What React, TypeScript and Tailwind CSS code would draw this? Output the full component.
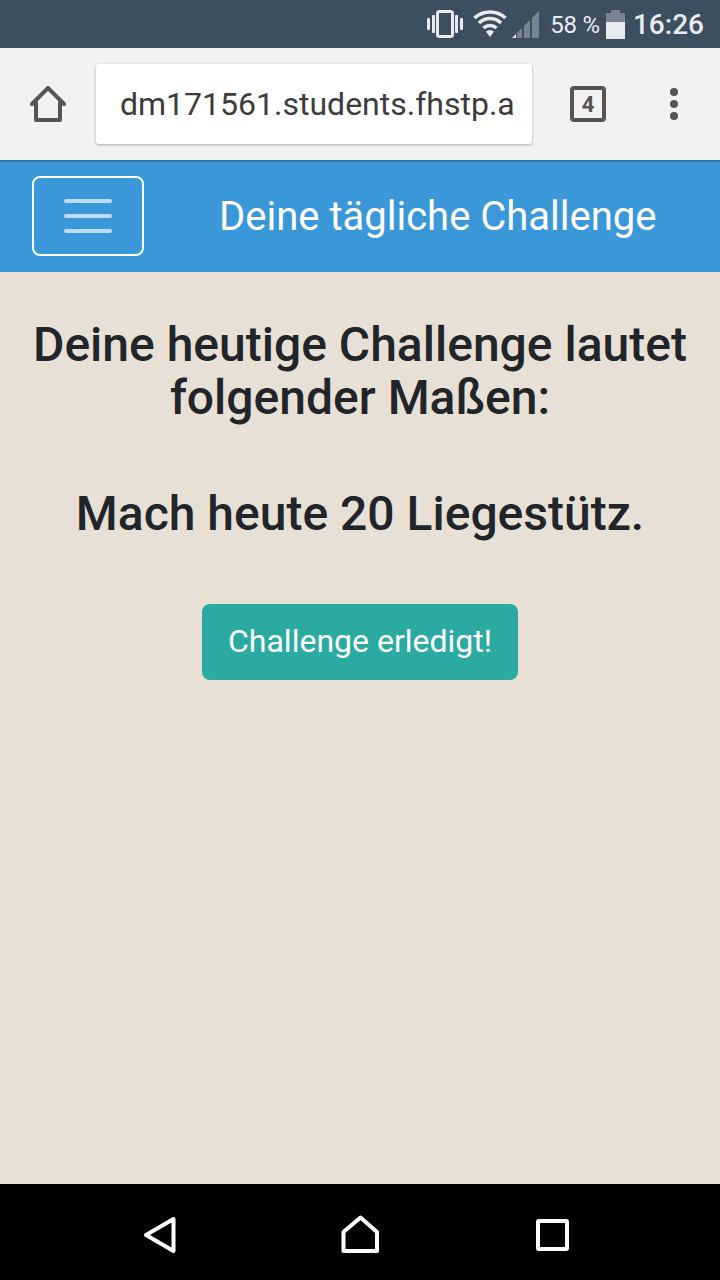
import React from "react";

function StatusBar(): JSX.Element {
  return (
    <div className="h-12 bg-[#3d4f5f] flex items-center justify-end pr-4 text-[#e9ecee]">
      <svg width="36" height="28" viewBox="0 0 36 28" className="mr-[10px]">
        <rect x="0" y="8" width="3" height="12" rx="1" fill="#e9ecee" />
        <rect x="5" y="5" width="3" height="18" rx="1" fill="#e9ecee" />
        <rect x="10.500" y="1.500" width="15" height="25" rx="2" fill="none" stroke="#e9ecee" strokeWidth="3" />
        <rect x="28" y="5" width="3" height="18" rx="1" fill="#e9ecee" />
        <rect x="33" y="8" width="3" height="12" rx="1" fill="#e9ecee" />
      </svg>
      <svg width="34" height="28" viewBox="0 0 34 28" className="mr-[5px]">
        <path d="M1.500 8 A23 23 0 0 1 32.500 8" fill="none" stroke="#e9ecee" strokeWidth="3.500" />
        <path d="M6 13 A16 16 0 0 1 28 13" fill="none" stroke="#e9ecee" strokeWidth="3.500" />
        <path d="M10.500 18 A9.500 9.500 0 0 1 23.500 18" fill="none" stroke="#e9ecee" strokeWidth="3.500" />
        <path d="M13 21.500 A6 6 0 0 1 21 21.500 L17 27 Z" fill="#e9ecee" />
      </svg>
      <svg width="27" height="28" viewBox="0 0 27 28" className="mr-[11px]">
        <path d="M0 28 L4 24 V28 Z" fill="#e9ecee" />
        <path d="M5 23 L10 18 V28 H5 Z" fill="#76858f" />
        <path d="M12 16 L18 10 V28 H12 Z" fill="#76858f" />
        <path d="M20 8 L27 1 V28 H20 Z" fill="#76858f" />
      </svg>
      <span className="text-[24px] leading-none mt-[2px] mr-[6px] tracking-[-0.2px]">58 %</span>
      <div className="w-[19px] h-[29px] flex flex-col items-center mr-[8px]">
        <div className="w-[9px] h-[3px] bg-[#76858f]" />
        <div className="w-[19px] h-[9px] bg-[#76858f]" />
        <div className="w-[19px] h-[17px] bg-[#e9ecee]" />
      </div>
      <span className="text-[28px] leading-none mt-[2px] font-medium">16:26</span>
    </div>
  );
}

function Toolbar(): JSX.Element {
  return (
    <div className="h-28 bg-[#f2f2f2] flex items-center">
      <div className="w-24 flex justify-center">
        <svg width="36" height="36" viewBox="0 0 36 36" fill="none" stroke="#555555" strokeWidth="4" strokeLinejoin="round" strokeLinecap="round">
          <path d="M2 18 L18 2 L34 18" />
          <path d="M6 15 V34 H30 V15" />
        </svg>
      </div>
      <div className="w-[436px] h-20 bg-white rounded-[3px] shadow-[0_1px_3px_rgba(0,0,0,0.3)] flex items-center pl-6 pr-4">
        <span className="text-[32px] text-[#3c3c3c] whitespace-nowrap overflow-hidden">dm171561.students.fhstp.ac.at</span>
      </div>
      <div className="ml-[38px] w-9 h-9 border-4 border-[#555555] rounded-[4px] flex items-center justify-center text-[22px] font-bold text-[#555555]">4</div>
      <div className="ml-[64px] flex flex-col gap-1">
        <div className="w-2 h-2 rounded-full bg-[#555555]" />
        <div className="w-2 h-2 rounded-full bg-[#555555]" />
        <div className="w-2 h-2 rounded-full bg-[#555555]" />
      </div>
    </div>
  );
}

function NavBar(): JSX.Element {
  return (
    <div className="h-28 bg-[#3a98d9] shadow-[inset_0_2px_0_#2a79b0] flex items-center pl-8">
      <div className="w-28 h-20 border-2 border-white rounded-lg flex flex-col items-center justify-center gap-[11px]">
        <div className="w-12 h-[4px] rounded-full bg-[#bcdcf3]" />
        <div className="w-12 h-[4px] rounded-full bg-[#bcdcf3]" />
        <div className="w-12 h-[4px] rounded-full bg-[#bcdcf3]" />
      </div>
      <div className="ml-[75px] mt-[2px] text-white text-[40px] whitespace-nowrap">Deine tägliche Challenge</div>
    </div>
  );
}

export default function App(): JSX.Element {
  return (
    <div className="w-[720px] h-[1280px] flex flex-col overflow-hidden font-['Roboto',sans-serif]">
      <StatusBar />
      <Toolbar />
      <NavBar />
      <div className="flex-1 bg-[#e8e0d5] flex flex-col items-center pt-[47px] text-[#212529] text-center">
        <h2 className="text-[48px] leading-[52.800px] font-medium">
          Deine heutige Challenge lautet
          <br />
          folgender Maßen:
        </h2>
        <h2 className="mt-[63px] text-[48px] leading-[52.800px] font-medium">Mach heute 20 Liegestütz.</h2>
        <button className="mt-[64px] w-[316px] h-[76px] pb-[2px] bg-[#2aaaa0] rounded-lg text-white text-[32px]">Challenge erledigt!</button>
      </div>
      <div className="h-24 bg-black">
        <svg width="720" height="96" viewBox="0 0 720 96" fill="none" stroke="#ffffff" strokeWidth="4" strokeLinejoin="round">
          <path d="M173.500 35 L146 51 L173.500 67 Z" />
          <path d="M343.500 67 V48 L360.500 33.500 L377 48 V67 Z" />
          <rect x="538" y="37" width="29" height="28" rx="1" />
        </svg>
      </div>
    </div>
  );
}
